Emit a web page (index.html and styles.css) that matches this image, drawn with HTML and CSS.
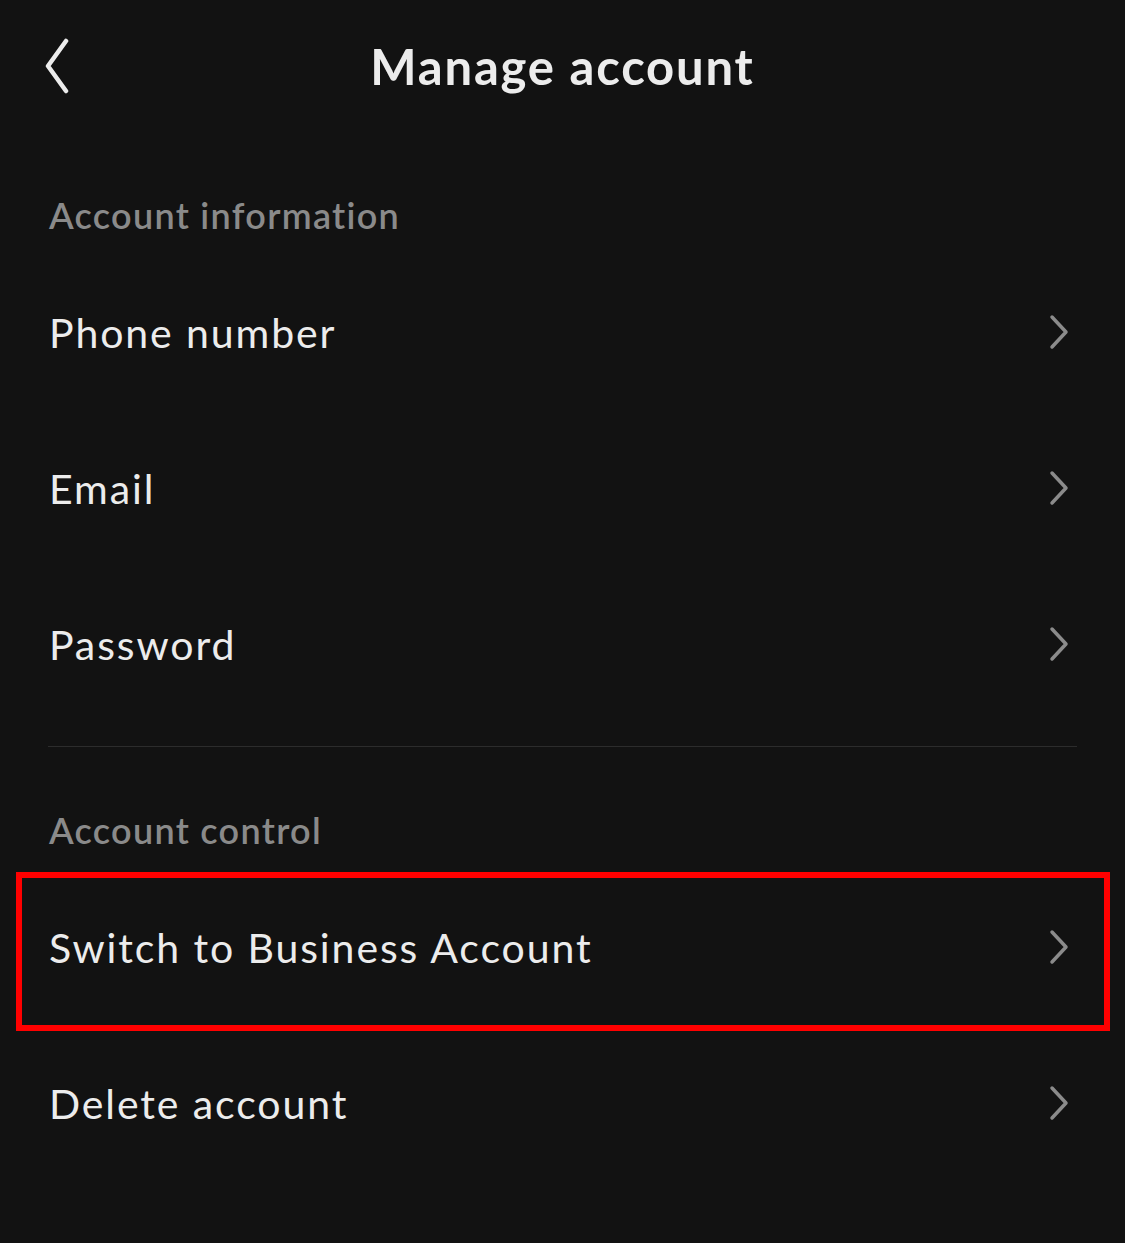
FILE: index.html
```html
<!DOCTYPE html>
<html lang="en">
<head>
    <meta charset="UTF-8">
    <meta name="viewport" content="width=device-width, initial-scale=1.0">
    <title>Manage account</title>
    <link rel="stylesheet" href="styles.css">
</head>
<body>

    <div class="screen">
        <div class="top-bar">
            <button class="back-btn" aria-label="Back">
                <svg width="30" height="60" viewBox="0 0 30 60">
                    <polyline points="24,7 6,32 24,57" fill="none" stroke="#ececec" stroke-width="4.5" stroke-linecap="round" stroke-linejoin="round"/>
                </svg>
            </button>
            <h1 class="title">Manage account</h1>
        </div>

        <div class="section-label">Account information</div>

        <div class="row">
            <span class="row-text">Phone number</span>
            <svg class="chevron" width="24" height="36" viewBox="0 0 24 36"><polyline points="5,3 19,18 5,33" fill="none" stroke="#8b8b8b" stroke-width="3.5" stroke-linecap="round" stroke-linejoin="round"/></svg>
        </div>
        <div class="row">
            <span class="row-text">Email</span>
            <svg class="chevron" width="24" height="36" viewBox="0 0 24 36"><polyline points="5,3 19,18 5,33" fill="none" stroke="#8b8b8b" stroke-width="3.5" stroke-linecap="round" stroke-linejoin="round"/></svg>
        </div>
        <div class="row">
            <span class="row-text">Password</span>
            <svg class="chevron" width="24" height="36" viewBox="0 0 24 36"><polyline points="5,3 19,18 5,33" fill="none" stroke="#8b8b8b" stroke-width="3.5" stroke-linecap="round" stroke-linejoin="round"/></svg>
        </div>

        <div class="divider"></div>

        <div class="section-label">Account control</div>

        <div class="row highlighted">
            <span class="row-text">Switch to Business Account</span>
            <svg class="chevron" width="24" height="36" viewBox="0 0 24 36"><polyline points="5,3 19,18 5,33" fill="none" stroke="#8b8b8b" stroke-width="3.5" stroke-linecap="round" stroke-linejoin="round"/></svg>
            <div class="mark-box"></div>
        </div>
        <div class="row">
            <span class="row-text">Delete account</span>
            <svg class="chevron" width="24" height="36" viewBox="0 0 24 36"><polyline points="5,3 19,18 5,33" fill="none" stroke="#8b8b8b" stroke-width="3.5" stroke-linecap="round" stroke-linejoin="round"/></svg>
        </div>
    </div>

</body>
</html>
```

FILE: styles.css
```css
body {
    margin: 0;
    background-color: #121212;
    font-family: Lato, "Open Sans", sans-serif;
    color: #ececec;
}
.screen {
    width: 1125px;
    min-height: 1243px;
}
.top-bar {
    position: relative;
    height: 132px;
    display: flex;
    align-items: center;
    justify-content: center;
}
.back-btn {
    position: absolute;
    left: 42px;
    top: 34px;
    background: none;
    border: none;
    padding: 0;
    cursor: pointer;
}
.back-btn svg {
    display: block;
}
.title {
    margin: 0;
    font-size: 49px;
    font-weight: 700;
    letter-spacing: 1.8px;
    color: #ececec;
}
.section-label {
    margin: 61px 0 17px;
    padding-left: 49px;
    font-size: 36px;
    line-height: 44px;
    font-weight: 600;
    letter-spacing: 1.3px;
    color: #8a8a8a;
}
.row {
    position: relative;
    height: 156px;
    display: flex;
    align-items: center;
    justify-content: space-between;
    padding: 0 54px 0 49px;
}
.row-text {
    font-size: 41px;
    letter-spacing: 1.9px;
    color: #ececec;
}
.chevron {
    display: block;
}
.divider {
    height: 1px;
    margin: 24px 48px 0 48px;
    background-color: #2c2c2c;
}
.mark-box {
    position: absolute;
    left: 16px;
    right: 15px;
    top: 3px;
    bottom: -6px;
    border: 6px solid #ff0000;
    pointer-events: none;
}
```
